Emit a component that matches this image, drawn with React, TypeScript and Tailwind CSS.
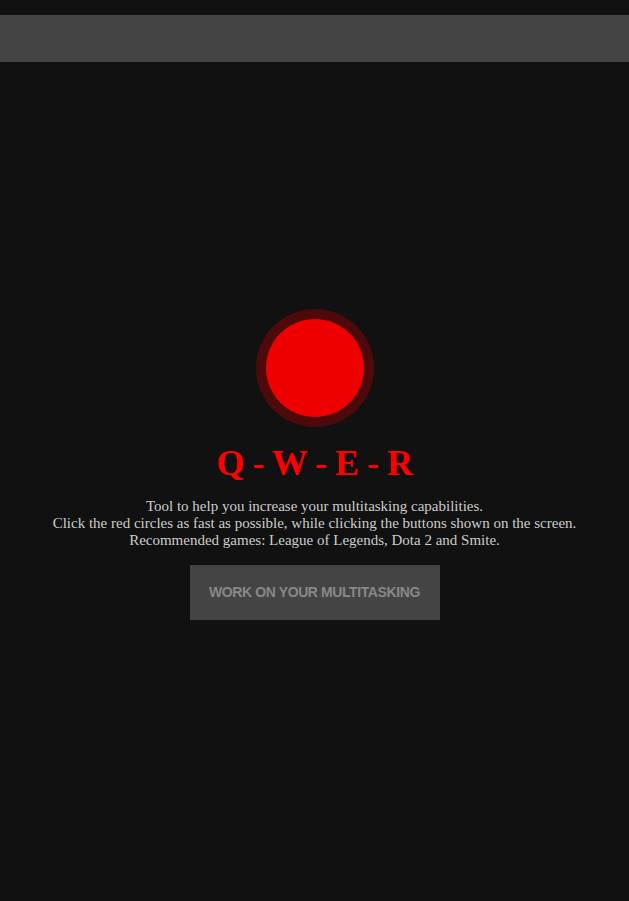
import React from "react";

export default function App() {
  return (
    <div className="min-h-[901px] w-full bg-[#111111] pt-[15px]">
      <div className="h-[47px] w-full bg-[#444444]" />
      <div className="flex flex-col items-center pt-[247px]">
        <div className="flex h-[118px] w-[118px] items-center justify-center rounded-full bg-[#4e0a0a]">
          <div className="h-[98px] w-[98px] rounded-full bg-[#ee0000]" />
        </div>
        <h1
          className="mt-[18px] text-[36px] font-bold leading-[36px] tracking-[-0.5px] text-[#ff0000]"
          style={{ fontFamily: '"Liberation Serif", "Times New Roman", serif' }}
        >
          Q - W - E - R
        </h1>
        <p
          className="mt-[17px] text-center text-[15px] leading-[17px] text-[#cccccc]"
          style={{ fontFamily: '"Liberation Serif", "Times New Roman", serif' }}
        >
          Tool to help you increase your multitasking capabilities.
          <br />
          Click the red circles as fast as possible, while clicking the buttons shown on the screen.
          <br />
          Recommended games: League of Legends, Dota 2 and Smite.
        </p>
        <button
          className="mt-[16px] h-[55px] w-[250px] bg-[#444444] text-[14px] font-bold leading-[15px] tracking-[-0.4px] text-[#888888] uppercase"
          style={{ fontFamily: '"Liberation Sans", Arial, sans-serif' }}
        >
          Work on your multitasking
        </button>
      </div>
    </div>
  );
}
